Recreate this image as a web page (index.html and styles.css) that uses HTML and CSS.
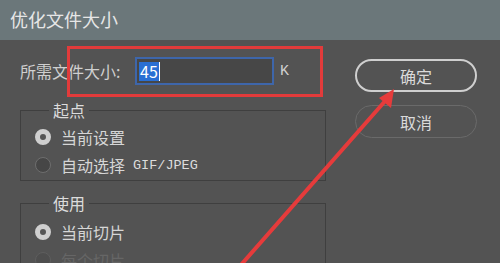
FILE: index.html
```html
<!DOCTYPE html>
<html lang="zh-CN">
<head>
  <meta charset="UTF-8" />
  <title>优化文件大小</title>
  <link rel="stylesheet" href="styles.css">
</head>
<body>
  <div class="dialog">
    <div class="titlebar">优化文件大小</div>
    <div class="content">
      <div class="left">
        <div class="size-row">
          <label class="size-label">所需文件大小:</label>
          <div class="size-input"><span class="sel">45</span><span class="caret"></span></div>
          <span class="unit">K</span>
        </div>

        <fieldset class="group group-start">
          <legend>起点</legend>
          <div class="radio checked"><span class="dot"></span>当前设置</div>
          <div class="radio"><span class="dot"></span>自动选择 <span class="mono">GIF/JPEG</span></div>
        </fieldset>

        <fieldset class="group group-use">
          <legend>使用</legend>
          <div class="radio checked"><span class="dot"></span>当前切片</div>
          <div class="radio disabled"><span class="dot"></span>每个切片</div>
        </fieldset>
      </div>

      <div class="right">
        <button class="btn btn-primary">确定</button>
        <button class="btn">取消</button>
      </div>
    </div>

    <!-- annotation overlay -->
    <div class="mark-box"></div>
    <svg class="mark-arrow" width="500" height="263" viewBox="0 0 500 263">
      <line x1="240" y1="266" x2="386" y2="100" stroke="#e63b3b" stroke-width="4" stroke-linecap="round"/>
      <polygon points="394,89 379,98 391,108" fill="#e63b3b"/>
    </svg>
  </div>
</body>
</html>
```

FILE: styles.css
```css
body {
  margin: 0;
  background: #535353;
  font-family: "Noto Sans CJK SC", "Noto Sans", sans-serif;
  color: #d8d8d8;
}
.dialog {
  position: relative;
  width: 500px;
  height: 263px;
  overflow: hidden;
  background: #535353;
}
.titlebar {
  height: 40px;
  line-height: 38px;
  padding-left: 10px;
  background: #6b777a;
  color: #e6e6e6;
  font-size: 18px;
}
.content {
  display: flex;
  padding: 17px 0 0 20px;
}
.left {
  width: 306px;
}
.size-row {
  display: flex;
  align-items: center;
  height: 28px;
  font-size: 16px;
}
.size-label {
  width: 115px;
  color: #cfcfcf;
}
.size-input {
  display: flex;
  align-items: center;
  box-sizing: border-box;
  width: 139px;
  height: 28px;
  padding-left: 2px;
  border: 2px solid #3e66aa;
  background: #474747;
}
.sel {
  background: #2a6fd3;
  color: #fff;
  font-size: 16px;
  line-height: 19px;
  padding: 0 1px;
}
.caret {
  width: 1px;
  height: 19px;
  background: #fff;
}
.unit {
  margin-left: 6px;
  font-family: "Liberation Mono", monospace;
  font-size: 15px;
  color: #d0d0d0;
}
.group {
  margin: 16px 0 0;
  padding: 4px 0 8px 14px;
  border: 1px solid #3f3f3f;
  border-radius: 0;
  box-sizing: border-box;
}
.group-start {
  height: 80px;
  margin-top: 16px;
}
.group-use {
  margin-top: 13px;
  height: 90px;
  padding-top: 6px;
}
.group legend {
  padding: 0 4px;
  margin-left: 14px;
  font-size: 16px;
  color: #dcdcdc;
  line-height: 18px;
}
.radio {
  display: flex;
  align-items: center;
  height: 28px;
  font-size: 16px;
  color: #d6d6d6;
}
.dot {
  box-sizing: border-box;
  width: 16px;
  height: 16px;
  margin-right: 10px;
  border-radius: 50%;
  border: 1px solid #6e6e6e;
  background: #464646;
}
.radio.checked .dot {
  border: 5px solid #cfcfcf;
  background: #555;
}
.radio.disabled {
  color: #666;
}
.radio.disabled .dot {
  border-color: #5e5e5e;
  background: #4e4e4e;
}
.mono {
  font-family: "Liberation Mono", monospace;
  font-size: 13.5px;
  margin-left: 8px;
  color: #dcdcdc;
}
.right {
  display: flex;
  flex-direction: column;
  gap: 13px;
  margin-left: 29px;
  padding-top: 2px;
}
.btn {
  width: 122px;
  height: 33px;
  border-radius: 17px;
  border: 1px solid #6a6a6a;
  background: transparent;
  color: #dadada;
  font-family: inherit;
  font-size: 16px;
}
.btn-primary {
  border: 2px solid #cfcfcf;
}
.mark-box {
  position: absolute;
  left: 67px;
  top: 46px;
  width: 250px;
  height: 45px;
  border: 3px solid #e23b3b;
}
.mark-arrow {
  position: absolute;
  left: 0;
  top: 0;
}
```
